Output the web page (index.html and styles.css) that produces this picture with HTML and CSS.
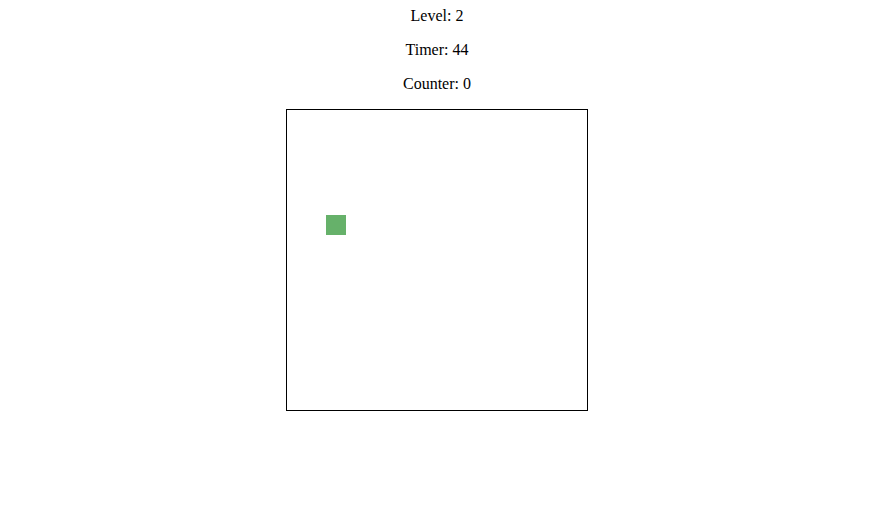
FILE: index.html
```html
<!DOCTYPE html>
<html>
<head>
<meta charset="utf-8">
<link rel="stylesheet" href="styles.css">
</head>
<body>
<main class="game">
  <div class="stat">Level: 2</div>
  <div class="stat">Timer: 44</div>
  <div class="stat">Counter: 0</div>
  <div class="board">
    <div class="target"></div>
  </div>
</main>
</body>
</html>
```

FILE: styles.css
```css
html, body {
  background: #ffffff;
}
body {
  margin: 7px 26px 8px 8px;
  font-family: "Liberation Serif", "Times New Roman", serif;
  font-size: 16px;
  color: #000000;
}
.game {
  display: flex;
  flex-direction: column;
  align-items: center;
  gap: 16px;
}
.stat {
  line-height: 18px;
  text-align: center;
}
.board {
  position: relative;
  width: 300px;
  height: 300px;
  border: 1px solid #000000;
}
.target {
  position: absolute;
  left: 39px;
  top: 105px;
  width: 20px;
  height: 20px;
  background: #66b16a;
}
```
